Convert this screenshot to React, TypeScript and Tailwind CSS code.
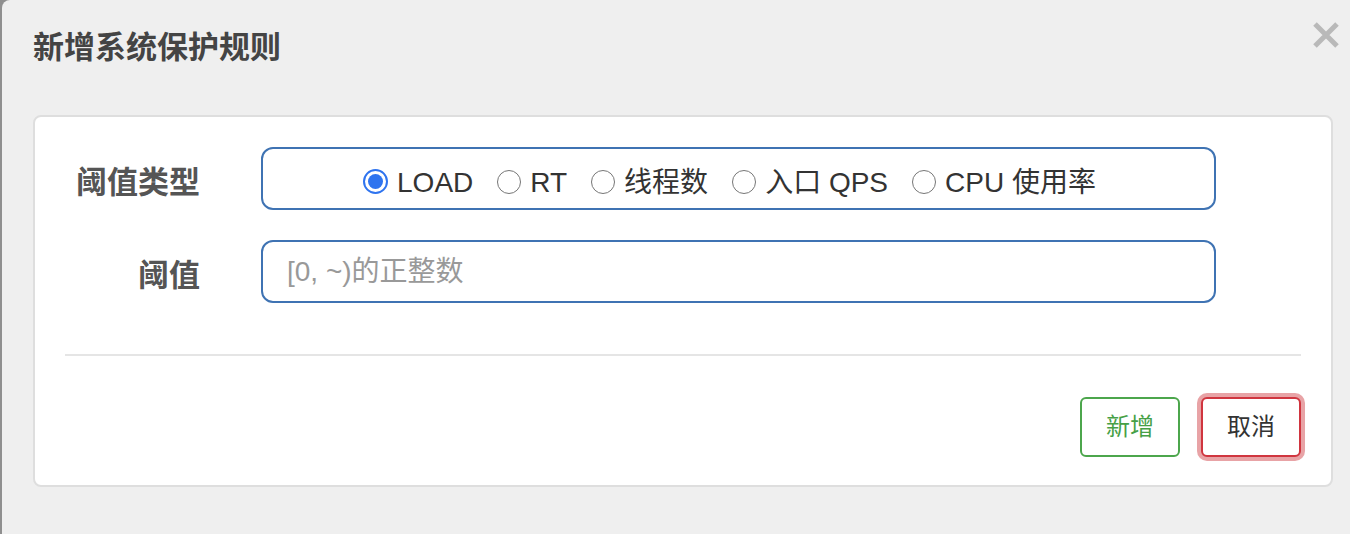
import React from "react";

const font = { fontFamily: '"Helvetica Neue", "Liberation Sans", Arial, "Noto Sans CJK SC", sans-serif' };

function Radio({ checked, label }: { checked?: boolean; label: string }) {
  return (
    <label className="flex items-center gap-[9px]">
      {checked ? (
        <span className="w-[25px] h-[25px] rounded-full border-[2px] border-[#2f74ef] bg-white flex items-center justify-center">
          <span className="w-[15px] h-[15px] rounded-full bg-[#2f74ef]" />
        </span>
      ) : (
        <span className="w-[24px] h-[24px] rounded-full border-[1.5px] border-[#767676] bg-white" />
      )}
      <span className="text-[28px] leading-none text-[#333] pt-[3px]">{label}</span>
    </label>
  );
}

export default function App() {
  return (
    <div className="w-[1350px] h-[534px] bg-[#8f8f8f] overflow-hidden" style={font}>
      <div className="ml-[2px] h-full bg-[#efefef] rounded-tl-[8px] relative">
        <div className="flex items-start justify-between pl-[31px] pr-[10px] pt-[32px] h-[115px]">
          <h1 className="text-[31px] font-bold leading-none text-[#444]">新增系统保护规则</h1>
          <svg width="28" height="28" viewBox="0 0 28 28" className="mt-[-11px]">
            <path d="M3 3 L25 25 M25 3 L3 25" stroke="#b9b9b9" strokeWidth="5" />
          </svg>
        </div>
        <div className="mx-[31px] mr-[17px] h-[372px] bg-white border-2 border-[#dedede] rounded-[8px] px-[30px] pt-[30px]">
          <div className="flex items-center">
            <div className="w-[135px] text-right text-[31px] font-bold text-[#555] leading-none pt-[8px]">阈值类型</div>
            <div className="ml-[61px] mr-[85px] flex-1 h-[63px] border-2 border-[#3f73b3] rounded-[12px] flex items-center justify-center gap-[24px] pr-[18px] pt-[6px]">
              <Radio checked label="LOAD" />
              <Radio label="RT" />
              <Radio label="线程数" />
              <Radio label="入口 QPS" />
              <Radio label="CPU 使用率" />
            </div>
          </div>
          <div className="flex items-center mt-[30px]">
            <div className="w-[135px] text-right text-[31px] font-bold text-[#555] leading-none pt-[8px]">阈值</div>
            <div className="ml-[61px] mr-[85px] flex-1 h-[63px] border-2 border-[#3f73b3] rounded-[12px] flex items-center px-[24px]">
              <span className="text-[28px] text-[#999] leading-none">[0, ~)的正整数</span>
            </div>
          </div>
          <div className="mt-[51px] h-[2px] bg-[#e5e5e5]" />
          <div className="flex justify-end gap-[21px] mt-[41px]">
            <button className="w-[100px] h-[60px] border-2 border-[#4ca64c] rounded-[6px] bg-white text-[24px] text-[#46a046]">新增</button>
            <button className="w-[100px] h-[60px] border-2 border-[#d0353f] rounded-[6px] bg-white text-[24px] text-[#333] ring-[4px] ring-[#e8a3a6]">取消</button>
          </div>
        </div>
      </div>
    </div>
  );
}
